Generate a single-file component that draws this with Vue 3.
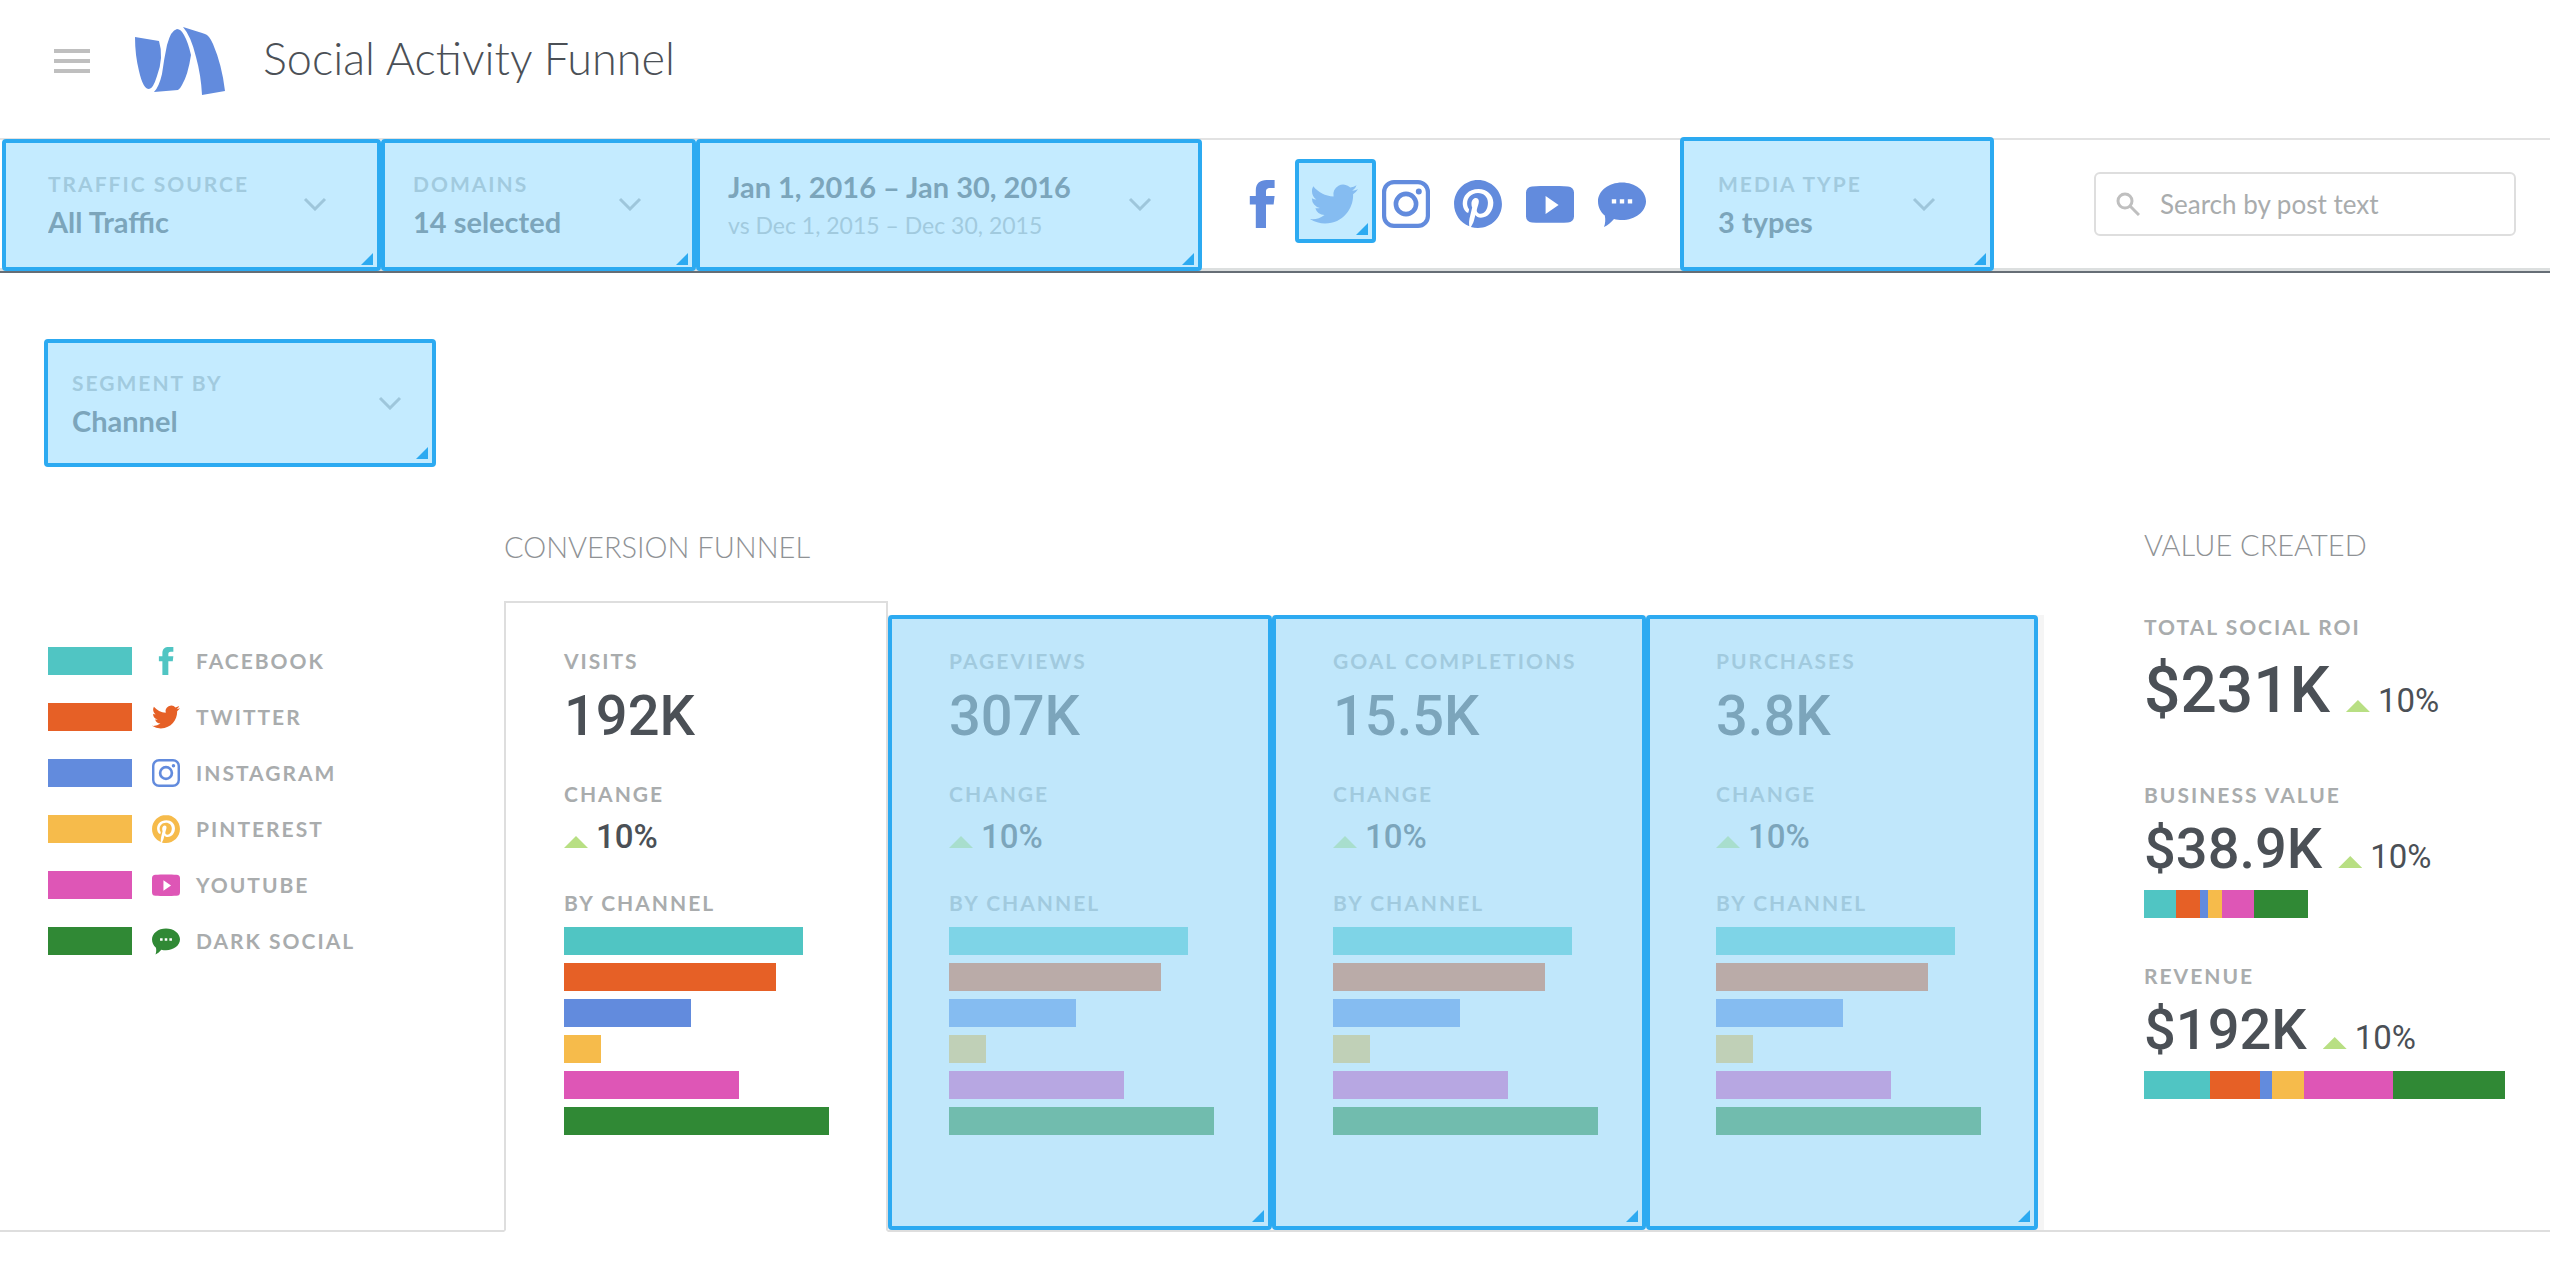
<script setup>
const icons = {
  facebook: 'M8.9 24V12.2h-3V8h3V5.2C8.9 1.7 11 0 14.3 0h4v4h-2.2C14.4 4 14 4.8 14 6v2h4.3l-.5 4.2H14V24z',
  twitter:
    'M23.953 4.57a10 10 0 01-2.825.775 4.958 4.958 0 002.163-2.723c-.951.555-2.005.959-3.127 1.184a4.92 4.92 0 00-8.384 4.482C7.69 8.095 4.067 6.13 1.64 3.162a4.822 4.822 0 00-.666 2.475c0 1.71.87 3.213 2.188 4.096a4.904 4.904 0 01-2.228-.616v.06a4.923 4.923 0 003.946 4.827 4.996 4.996 0 01-2.212.085 4.936 4.936 0 004.604 3.417 9.867 9.867 0 01-6.102 2.105c-.39 0-.779-.023-1.17-.067a13.995 13.995 0 007.557 2.209c9.053 0 13.998-7.496 13.998-13.985 0-.21 0-.42-.015-.63A9.935 9.935 0 0024 4.59z',
  instagram:
    'M6 0h12a6 6 0 016 6v12a6 6 0 01-6 6H6a6 6 0 01-6-6V6a6 6 0 016-6zm0 2.1A3.9 3.9 0 002.1 6v12A3.9 3.9 0 006 21.9h12a3.9 3.9 0 003.9-3.9V6A3.9 3.9 0 0018 2.1zM12 5.8a6.2 6.2 0 110 12.4 6.2 6.2 0 010-12.4zm0 2.3a3.9 3.9 0 100 7.8 3.9 3.9 0 000-7.8zM18.4 4.2a1.5 1.5 0 110 3 1.5 1.5 0 010-3z',
  pinterest:
    'M12.017 0C5.396 0 .029 5.367.029 11.987c0 5.079 3.158 9.417 7.618 11.162-.105-.949-.199-2.403.041-3.439.219-.937 1.406-5.957 1.406-5.957s-.359-.72-.359-1.781c0-1.663.967-2.911 2.168-2.911 1.024 0 1.518.769 1.518 1.688 0 1.029-.653 2.567-.992 3.992-.285 1.193.6 2.165 1.775 2.165 2.128 0 3.768-2.245 3.768-5.487 0-2.861-2.063-4.869-5.008-4.869-3.41 0-5.409 2.562-5.409 5.199 0 1.033.394 2.143.889 2.741.099.12.112.225.085.345-.09.375-.293 1.199-.334 1.363-.053.225-.172.271-.401.165-1.495-.69-2.433-2.878-2.433-4.646 0-3.776 2.748-7.252 7.92-7.252 4.158 0 7.392 2.967 7.392 6.923 0 4.135-2.607 7.462-6.233 7.462-1.214 0-2.354-.629-2.758-1.379l-.749 2.848c-.269 1.045-1.004 2.352-1.498 3.146 1.123.345 2.306.535 3.55.535 6.607 0 11.985-5.365 11.985-11.987C23.97 5.39 18.592.026 11.985.026z',
  youtube:
    'M3 3.2C8 2.9 16 2.9 21 3.2a3 3 0 013 3v12a3 3 0 01-3 3c-5 .3-13 .3-18 0a3 3 0 01-3-3v-12a3 3 0 013-3zM9.8 8v9l6.5-4.5z',
  chat:
    'M12 1.2c6.6 0 12 4.2 12 9.4S18.6 20 12 20c-1.2 0-2.8-.2-4-.5-1.3 1.5-3 3.2-5 4 .7-1.8.8-3.8.4-5.7C1.3 16 0 13.5 0 10.6 0 5.4 5.4 1.2 12 1.2zM6.9 9.6v2.2h2.2V9.6zm4 0v2.2h2.2V9.6zm4 0v2.2h2.2V9.6z'
}

const channels = [
  { name: 'Facebook', icon: icons.facebook, color: '#50c5c3', share: 90 },
  { name: 'Twitter', icon: icons.twitter, color: '#e66026', share: 80 },
  { name: 'Instagram', icon: icons.instagram, color: '#628bdd', share: 48 },
  { name: 'Pinterest', icon: icons.pinterest, color: '#f6bb4b', share: 14 },
  { name: 'YouTube', icon: icons.youtube, color: '#de56b6', share: 66 },
  { name: 'Dark Social', icon: icons.chat, color: '#308935', share: 100 }
]

const stages = [
  { name: 'Visits', total: '192K', change: '10%', selected: false },
  { name: 'Pageviews', total: '307K', change: '10%', selected: true },
  { name: 'Goal Completions', total: '15.5K', change: '10%', selected: true },
  { name: 'Purchases', total: '3.8K', change: '10%', selected: true, last: true }
]

const values = [
  { name: 'Total Social ROI', total: '$231K', change: '10%', large: true },
  { name: 'Business Value', total: '$38.9K', change: '10%', width: 164, split: [32, 24, 8, 14, 32, 54] },
  { name: 'Revenue', total: '$192K', change: '10%', width: 361, split: [66, 50, 12, 32, 89, 112] }
]
</script>

<template>
  <div class="page">
    <header class="top">
      <button class="menu" type="button" aria-label="Menu"><i></i><i></i><i></i></button>
      <svg class="logo" viewBox="0 0 90 68" aria-hidden="true">
        <path d="M0 10L24 14Q29 30 22 49Q18 62 14 62Q8 62 4 44Q0 28 0 10z" />
        <path d="M42 2Q46 2 49 8Q53 15 56 28Q53 48 47 58Q45 62 43 63L19 65Q24 60 27 47Q29 32 32 18Q36 3 42 2z" />
        <path d="M48 0Q64 5 70 7Q74 8 78 17Q87 38 90 64L67 68Q66 48 61 30Q56 9 48 0z" />
      </svg>
      <h1>Social Activity Funnel</h1>
    </header>

    <div class="filters">
      <div class="filter source marked">
        <div class="field">
          <label class="caption" for="source">Traffic Source</label>
          <select id="source"><option>All Traffic</option></select>
        </div>
        <svg class="chevron" viewBox="0 0 24 14"><path d="M2 2l10 10L22 2" /></svg>
      </div>
      <div class="filter marked">
        <div class="field">
          <label class="caption" for="domains">Domains</label>
          <select id="domains"><option>14 selected</option></select>
        </div>
        <svg class="chevron" viewBox="0 0 24 14"><path d="M2 2l10 10L22 2" /></svg>
      </div>
      <button class="filter dates marked" type="button">
        <span class="field">
          <span class="range">Jan 1, 2016 – Jan 30, 2016</span>
          <span class="compare">vs Dec 1, 2015 – Dec 30, 2015</span>
        </span>
        <svg class="chevron" viewBox="0 0 24 14"><path d="M2 2l10 10L22 2" /></svg>
      </button>
      <div class="networks">
        <button
          v-for="c in channels"
          :key="c.name"
          type="button"
          :class="['network', { marked: c.name === 'Twitter' }]"
          :aria-label="c.name"
        >
          <svg viewBox="0 0 24 24"><path fill-rule="evenodd" :d="c.icon" /></svg>
        </button>
      </div>
      <div class="filter media marked">
        <div class="field">
          <label class="caption" for="media">Media Type</label>
          <select id="media"><option>3 types</option></select>
        </div>
        <svg class="chevron" viewBox="0 0 24 14"><path d="M2 2l10 10L22 2" /></svg>
      </div>
      <div class="search-cell">
        <div class="search">
          <svg viewBox="0 0 24 24"><circle cx="9" cy="9" r="7" /><path d="M14 14l9 9" /></svg>
          <input type="text" placeholder="Search by post text" aria-label="Search by post text" />
        </div>
      </div>
    </div>

    <div class="segment marked">
      <div class="field">
        <label class="caption" for="segment">Segment by</label>
        <select id="segment"><option>Channel</option></select>
      </div>
      <svg class="chevron" viewBox="0 0 24 14"><path d="M2 2l10 10L22 2" /></svg>
    </div>

    <main class="board">
      <h2 class="funnel-title">Conversion Funnel</h2>

      <ul class="legend">
        <li v-for="c in channels" :key="c.name" :style="{ color: c.color }">
          <span class="swatch"></span>
          <svg viewBox="0 0 24 24"><path fill-rule="evenodd" :d="c.icon" /></svg>
          <span class="caption">{{ c.name }}</span>
        </li>
      </ul>

      <section
        v-for="s in stages"
        :key="s.name"
        :class="['stage', { marked: s.selected, open: !s.selected, last: s.last }]"
      >
        <h3 class="caption">{{ s.name }}</h3>
        <p class="total">{{ s.total }}</p>
        <h4 class="caption">Change</h4>
        <p class="change"><i class="up"></i>{{ s.change }}</p>
        <h4 class="caption by">By Channel</h4>
        <div class="bars">
          <span v-for="c in channels" :key="c.name" :style="{ width: c.share + '%', background: c.color }"></span>
        </div>
      </section>

      <aside class="value">
        <h2>Value Created</h2>
        <section v-for="v in values" :key="v.name" :class="{ large: v.large }">
          <h3 class="caption">{{ v.name }}</h3>
          <p class="amount">
            <span class="total">{{ v.total }}</span>
            <span class="change"><i class="up"></i>{{ v.change }}</span>
          </p>
          <div v-if="v.split" class="stack" :style="{ width: v.width + 'px' }">
            <span v-for="(n, i) in v.split" :key="i" :style="{ flexGrow: n, background: channels[i].color }"></span>
          </div>
        </section>
      </aside>
    </main>
  </div>
</template>

<style>
body {
  margin: 0;
  background: #fff;
}
</style>

<style scoped>
.page {
  font-family: Lato, "Open Sans", sans-serif;
  color: #4b5056;
}
.page * {
  box-sizing: border-box;
}
h1, h2, h3, h4, p, ul {
  margin: 0;
  padding: 0;
  font-weight: 400;
}
button, select, input {
  margin: 0;
  padding: 0;
  border: 0;
  background: none;
  color: inherit;
  font: inherit;
  text-align: left;
}
svg {
  display: block;
  flex: none;
}

.top {
  display: flex;
  align-items: center;
  height: 138px;
  padding: 0 54px 16px;
}
.menu {
  display: grid;
  gap: 6px;
  width: 36px;
  margin-right: 45px;
}
.menu i {
  height: 4px;
  background: #bfbfbf;
}
.logo {
  width: 90px;
  height: 68px;
  margin-right: 38px;
  fill: #628bdd;
}
h1 {
  padding-bottom: 6px;
  font-size: 45px;
  line-height: 56px;
  font-weight: 300;
}

/* Selection highlight laid over a control or a card */
.marked {
  position: relative;
}
.marked::before {
  content: "";
  position: absolute;
  inset: 0;
  z-index: 1;
  border: 4px solid #2caaf1;
  border-radius: 4px;
  background: rgba(157, 222, 255, 0.6);
  background-clip: padding-box;
  pointer-events: none;
}
.marked::after {
  content: "";
  position: absolute;
  right: 8px;
  bottom: 8px;
  z-index: 2;
  width: 12px;
  height: 12px;
  background: #2caaf1;
  clip-path: polygon(100% 0, 100% 100%, 0 100%);
  pointer-events: none;
}

.caption {
  display: block;
  font-size: 21px;
  line-height: 24px;
  font-weight: 700;
  letter-spacing: 2px;
  text-transform: uppercase;
  color: #a9acad;
}
.filters {
  display: grid;
  grid-template-columns:
    minmax(0, 379fr) minmax(0, 315fr) minmax(0, 506fr) minmax(0, 478fr)
    minmax(0, 314fr) minmax(0, 556fr);
  height: 133px;
  padding-left: 2px;
  border-top: 2px solid #e2e2e2;
  border-bottom: 3px solid #dcdfdf;
  box-shadow: 0 2px 0 #666e76;
}
.filter {
  display: flex;
  align-items: center;
  justify-content: space-between;
  padding: 0 54px 0 32px;
}
.filter.source {
  padding-left: 46px;
}
.filter.dates {
  padding-right: 50px;
}
.filter.media {
  padding: 0 58px 0 38px;
}
.filter.marked::before {
  inset: -1px 0 -3px;
}
.filter.marked::after {
  bottom: 3px;
}
.filter.media::before {
  top: -3px;
}
.field {
  flex: 1;
  padding-top: 4px;
}
.field select {
  display: block;
  width: 100%;
  height: 36px;
  margin-top: 8px;
  appearance: none;
  font-size: 29px;
  line-height: 36px;
  font-weight: 700;
}
.chevron {
  width: 24px;
  height: 14px;
  fill: none;
  stroke: #a0a3a5;
  stroke-width: 3;
}
.range, .compare {
  display: block;
  white-space: nowrap;
}
.range {
  font-size: 29px;
  line-height: 36px;
  font-weight: 700;
}
.compare {
  margin-top: 2px;
  font-size: 23px;
  line-height: 36px;
  color: #a9acad;
}
.networks {
  display: flex;
  align-items: center;
  gap: 24px;
  padding-left: 36px;
}
.network svg {
  width: 48px;
  height: 48px;
  fill: #628bdd;
}
.network.marked::before {
  inset: -21px -18px -15px -15px;
}
.network.marked::after {
  right: -10px;
  bottom: -7px;
}
.search-cell {
  display: flex;
  align-items: center;
  padding: 0 34px 0 100px;
}
.search {
  display: flex;
  flex: 1;
  align-items: center;
  gap: 20px;
  height: 64px;
  padding: 0 20px;
  border: 2px solid #dedede;
  border-radius: 6px;
}
.search svg {
  width: 24px;
  height: 24px;
  fill: none;
  stroke: #bfbfbf;
  stroke-width: 3;
}
.search input {
  flex: 1;
  min-width: 0;
  font-size: 26px;
  line-height: 36px;
  outline: none;
}
.search input::placeholder {
  color: #a9acad;
  opacity: 1;
}

.segment {
  display: flex;
  align-items: center;
  width: 392px;
  height: 128px;
  margin: 68px 0 64px 44px;
  padding: 0 34px 0 28px;
}

.board {
  display: grid;
  grid-template-columns:
    minmax(0, 504fr) minmax(0, 384fr) minmax(0, 384fr) minmax(0, 374fr)
    minmax(0, 398fr) minmax(0, 506fr);
  grid-template-rows: 70px auto;
}
h2 {
  font-size: 29px;
  line-height: 32px;
  font-weight: 300;
  text-transform: uppercase;
  white-space: nowrap;
  color: #8f9295;
}
.funnel-title {
  grid-column: 2 / 6;
}
.legend {
  grid-row: 2;
  grid-column: 1;
  display: grid;
  align-content: start;
  gap: 28px;
  padding: 46px 0 0 48px;
  border-bottom: 2px solid #dedede;
  list-style: none;
}
.legend li {
  display: flex;
  align-items: center;
}
.swatch {
  width: 84px;
  height: 28px;
  margin-right: 20px;
  background: currentColor;
}
.legend svg {
  width: 28px;
  height: 28px;
  margin-right: 16px;
  fill: currentColor;
}

.stage {
  grid-row: 2;
  margin-top: 14px;
  padding: 34px 0 95px 61px;
  border-bottom: 2px solid #dedede;
  background: #f5f5f5;
}
.stage.open {
  margin-top: 0;
  padding: 46px 0 95px 58px;
  border: 2px solid #dedede;
  border-bottom-color: #fff;
  background: #fff;
}
.stage.last {
  padding-left: 70px;
}
.stage.last::before {
  right: 6px;
}
.stage.last::after {
  right: 14px;
}
.total, .change {
  font-family: Roboto, "Liberation Sans", sans-serif;
}
.total {
  margin: 11px 0 34px;
  font-size: 56px;
  line-height: 64px;
  font-weight: 500;
}
.change {
  display: flex;
  align-items: baseline;
  gap: 8px;
  height: 32px;
  margin-top: 14px;
  font-size: 33px;
  line-height: 34px;
  font-weight: 500;
}
.up {
  width: 24px;
  height: 12px;
  margin-bottom: 8px;
  background: #b8df83;
  clip-path: polygon(50% 0, 100% 100%, 0 100%);
}
.by {
  margin: 39px 0 12px;
}
.bars {
  display: grid;
  gap: 8px;
  width: 265px;
}
.bars span {
  height: 28px;
}

.value {
  grid-row: 1 / 3;
  grid-column: 6;
  display: flex;
  flex-direction: column;
  padding-left: 100px;
  border-bottom: 2px solid #dedede;
}
.value section {
  margin-bottom: 46px;
}
.value h2 {
  margin: -2px 0 54px;
}
.value .amount {
  display: flex;
  align-items: baseline;
  gap: 16px;
  margin: 10px 0 9px;
}
.value .total, .value .change {
  margin: 0;
}
.value .change {
  font-weight: 400;
}
.value .large {
  margin-bottom: 51px;
}
.value .large .total {
  font-size: 64px;
}
.value .large .amount {
  margin-top: 20px;
}
.stack {
  display: flex;
  height: 28px;
}
</style>
